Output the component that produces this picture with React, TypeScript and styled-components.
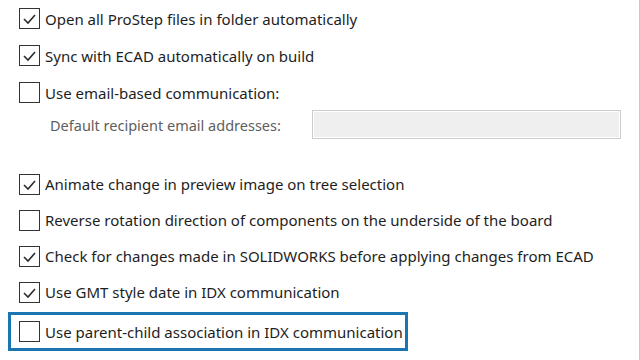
import styled, { createGlobalStyle } from 'styled-components';

const GlobalStyle = createGlobalStyle`
  html, body {
    margin: 0;
    padding: 0;
    background: #ffffff;
  }
`;

const Panel = styled.div`
  width: 620px;
  height: 360px;
  border-right: 1px solid #c8c8c8;
  background: #ffffff;
  font-family: 'Noto Sans', 'Open Sans', sans-serif;
  font-size: 15px;
  color: #1e1e1e;
  display: flex;
  flex-direction: column;
  padding-left: 19px;
  box-sizing: content-box;
  overflow: hidden;
`;

const Group = styled.div<{ $gap?: number }>`
  display: flex;
  flex-direction: column;
  margin-top: ${({ $gap }) => $gap ?? 0}px;
`;

const Row = styled.label<{ $height: number }>`
  display: flex;
  align-items: center;
  gap: 5px;
  height: ${({ $height }) => $height}px;
  white-space: nowrap;
`;

const Box = styled.span`
  width: 21px;
  height: 21px;
  box-sizing: border-box;
  border: 1px solid #333333;
  background: #ffffff;
  display: flex;
  align-items: center;
  justify-content: center;
  flex-shrink: 0;
`;

const FieldRow = styled.div`
  display: flex;
  align-items: center;
  height: 29px;
  margin-top: -1px;
  padding-left: 31px;
`;

const FieldLabel = styled.span`
  color: #5e5e5e;
  font-size: 14.5px;
  width: 262px;
  white-space: nowrap;
`;

const Field = styled.div`
  width: 309px;
  height: 29px;
  box-sizing: border-box;
  border: 1px solid #cccccc;
  box-shadow: inset 0 0 0 1px #ffffff;
  background: #efefef;
`;

const Highlight = styled.div`
  margin-top: 2px;
  margin-left: -11px;
  width: 400px;
  height: 39px;
  box-sizing: border-box;
  border: 3px solid #1b75b3;
  padding-left: 8px;
  display: flex;
  align-items: center;
`;

function Check({ checked }: { checked: boolean }) {
  return (
    <Box>
      {checked && (
        <svg width="15" height="15" viewBox="0 0 15 15">
          <polyline
            points="2,8 6,12 13,4"
            fill="none"
            stroke="#2b2b2b"
            strokeWidth="1.6"
          />
        </svg>
      )}
    </Box>
  );
}

function Option({ checked, label, height = 36 }: { checked: boolean; label: string; height?: number }) {
  return (
    <Row $height={height}>
      <Check checked={checked} />
      <span>{label}</span>
    </Row>
  );
}

export default function App() {
  return (
    <>
      <GlobalStyle />
      <Panel>
        <Group>
          <Option checked label="Open all ProStep files in folder automatically" height={37} />
          <Option checked label="Sync with ECAD automatically on build" height={37} />
          <Option checked={false} label="Use email-based communication:" height={37} />
        </Group>
        <FieldRow>
          <FieldLabel>Default recipient email addresses:</FieldLabel>
          <Field />
        </FieldRow>
        <Group $gap={27}>
          <Option checked label="Animate change in preview image on tree selection" />
          <Option checked={false} label="Reverse rotation direction of components on the underside of the board" />
          <Option checked label="Check for changes made in SOLIDWORKS before applying changes from ECAD" />
          <Option checked label="Use GMT style date in IDX communication" />
        </Group>
        <Highlight>
          <Option checked={false} label="Use parent-child association in IDX communication" />
        </Highlight>
      </Panel>
    </>
  );
}
